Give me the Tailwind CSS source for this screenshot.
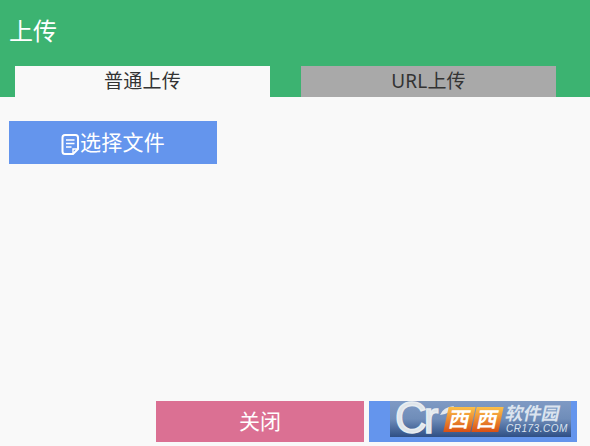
<!DOCTYPE html>
<html lang="zh-CN">
<head>
    <meta charset="UTF-8">
    <title>上传</title>
    <script src="https://cdn.jsdelivr.net/npm/@tailwindcss/browser@4"></script>
</head>
<body class="bg-[#f9f9f9] h-[446px] w-[590px] overflow-hidden flex flex-col font-['Noto_Sans','Noto_Sans_CJK_SC',sans-serif]">
    <!-- Header -->
    <div class="bg-[#3cb371] h-[97px] flex flex-col justify-between">
        <h1 class="text-white text-[24px] leading-[32px] pl-[9px] pt-[15px]">上传</h1>
        <div class="flex pl-[15px] gap-[31px]">
            <button class="w-[255px] h-[31px] bg-[#f9f9f9] text-[#333] text-[19px] leading-[31px] tracking-[0.2px]">普通上传</button>
            <button class="w-[255px] h-[31px] bg-[#a9a9a9] text-[#333] text-[19px] leading-[31px] tracking-[0.2px]">URL上传</button>
        </div>
    </div>

    <!-- Body -->
    <div class="flex-1 pt-[24px] pl-[9px]">
        <button class="w-[208px] h-[43px] bg-[#6495ed] text-white text-[21px] flex items-center justify-center">
            <svg class="w-[19px] h-[21px] mt-[3px]" viewBox="0 0 19 21" fill="none" stroke="currentColor" stroke-width="2">
                <path d="M12 20H4Q1.5 20 1.5 17.5V3.5Q1.5 1 4 1H14.5Q17 1 17 3.5V15Z"/>
                <path d="M5 6H13.5M5 9.5H13.5M5 13H10.5" stroke-width="1.6"/>
                <path d="M12 20V15H17" stroke-width="1.4"/>
            </svg>
            <span class="tracking-[0.2px]">选择文件</span>
        </button>
    </div>

    <!-- Footer -->
    <div class="flex justify-end gap-[5px] pr-[13px] pb-[4px]">
        <button class="w-[208px] h-[41px] bg-[#db7093] text-white text-[21px]">关闭</button>
        <div class="relative w-[208px] h-[41px] bg-[#6495ed] text-white text-[21px] flex items-center justify-center">
            <span>开始上传</span>
            <!-- Watermark -->
            <div class="absolute left-[21px] top-0 w-[181px] h-[36px] bg-gradient-to-b from-[#7f9ac4] via-[#6f8db9] to-[#2f4f85] flex items-center">
                <span class="absolute left-[5px] -top-[5px] text-[#dfe5ea] text-[44px] leading-[44px] font-['Liberation_Sans',sans-serif] tracking-[-3px] [-webkit-text-stroke:1.5px_#e8edf1]">Cr</span>
                <svg class="absolute left-[50px] top-[5px] w-[14px] h-[9px]" viewBox="0 0 14 9"><path d="M0 9Q3 1 14 0Q11 8 0 9Z" fill="#e3e8ec"/></svg>
                <div class="flex gap-[1px] pl-[56px] items-center">
                    <span class="w-[27px] h-[25px] bg-gradient-to-b from-[#fbc04a] to-[#d84f14] text-white text-[21px] leading-[25px] font-bold text-center -skew-x-12">西</span>
                    <span class="w-[27px] h-[25px] bg-gradient-to-b from-[#fbc04a] to-[#d84f14] text-white text-[21px] leading-[25px] font-bold text-center -skew-x-12">西</span>
                </div>
                <div class="flex flex-col items-start pl-[5px] text-[#dbe4ef]">
                    <span class="text-[18px] leading-[20px] font-bold -skew-x-12">软件园</span>
                    <span class="text-[10px] leading-[12px] italic tracking-[0.5px] font-['Liberation_Sans',sans-serif]">CR173.COM</span>
                </div>
            </div>
        </div>
    </div>
</body>
</html>
